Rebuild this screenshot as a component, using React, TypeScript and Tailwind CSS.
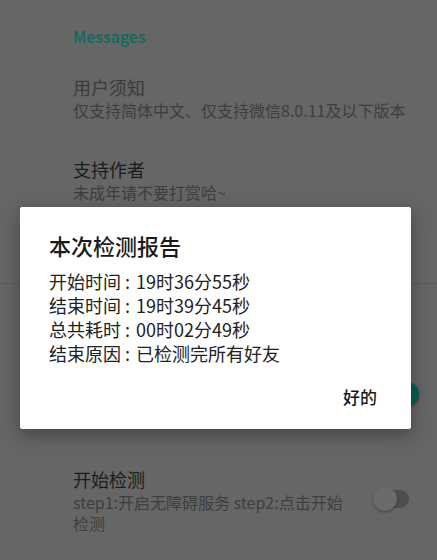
const cjk = { fontFamily: '"Noto Sans CJK SC", "Noto Sans", sans-serif' };

function Switch({ on }: { on: boolean }) {
  return (
    <div className="relative w-[38px] h-[24px] flex items-center">
      <div className={`ml-[4px] w-[32px] h-[18px] rounded-full ${on ? 'bg-[#0a4a43]' : 'bg-[#4e4e4e]'}`} />
      <div
        className={`absolute top-0 w-[24px] h-[24px] rounded-full shadow-[0_1px_3px_rgba(0,0,0,0.35)] ${
          on ? 'right-0 bg-[#0b5e55]' : 'left-0 bg-[#6b6b6b]'
        }`}
      />
    </div>
  );
}

function ReportLine({ label, value }: { label: string; value: string }) {
  return (
    <p>
      {label}
      <span className="ml-[4px] mr-[6px]">:</span>
      {value}
    </p>
  );
}

export default function App() {
  return (
    <div className="relative w-[437px] h-[560px] overflow-hidden bg-[#666666]" style={cjk}>
      {/* 设置列表 */}
      <div className="flex flex-col">
        <div className="pl-[73px] pt-[26px] text-[16px] leading-[20px] font-medium text-[#0d6a5e]">Messages</div>

        <div className="pl-[73px] pt-[29px]">
          <div className="text-[18px] leading-[24px] text-[#3b3b3b]">用户须知</div>
          <div className="text-[16px] leading-[22px] text-[#3e3e3e]">仅支持简体中文、仅支持微信8.0.11及以下版本</div>
        </div>

        <div className="pl-[73px] pt-[36px]">
          <div className="text-[18px] leading-[24px] text-[#1c1c1c]">支持作者</div>
          <div className="text-[16px] leading-[22px] text-[#3e3e3e]">未成年请不要打赏哈~</div>
        </div>

        <div className="h-[80px]" />
        <div className="border-t border-[#5c5c5c]" />

        <div className="h-[182px] flex flex-col">
          <div className="mt-[98px] flex justify-end pr-[18px]">
            <Switch on />
          </div>
        </div>

        <div className="flex items-center pl-[73px] pr-[26px]">
          <div className="w-[276px]">
            <div className="text-[18px] leading-[26px] text-[#1c1c1c]">开始检测</div>
            <div className="text-[16px] leading-[21px] text-[#3e3e3e]">step1:开启无障碍服务 step2:点击开始检测</div>
          </div>
          <div className="ml-auto mt-[-2px]">
            <Switch on={false} />
          </div>
        </div>
      </div>

      {/* 检测报告弹窗 */}
      <div className="absolute left-[20px] top-[207px] w-[391px] h-[222px] bg-white rounded-[2px] shadow-[0_6px_20px_rgba(0,0,0,0.35)] pl-[29px] pr-[34px] pt-[24px]">
        <h2 className="text-[22px] leading-[28px] font-medium text-[#1a1a1a]">本次检测报告</h2>
        <div className="mt-[10px] text-[18px] leading-[24px] text-[#222222]">
          <ReportLine label="开始时间" value="19时36分55秒" />
          <ReportLine label="结束时间" value="19时39分45秒" />
          <ReportLine label="总共耗时" value="00时02分49秒" />
          <ReportLine label="结束原因" value="已检测完所有好友" />
        </div>
        <div className="mt-[20px] flex justify-end">
          <button className="text-[17px] leading-[24px] font-medium text-[#1a1a1a]">好的</button>
        </div>
      </div>
    </div>
  );
}
